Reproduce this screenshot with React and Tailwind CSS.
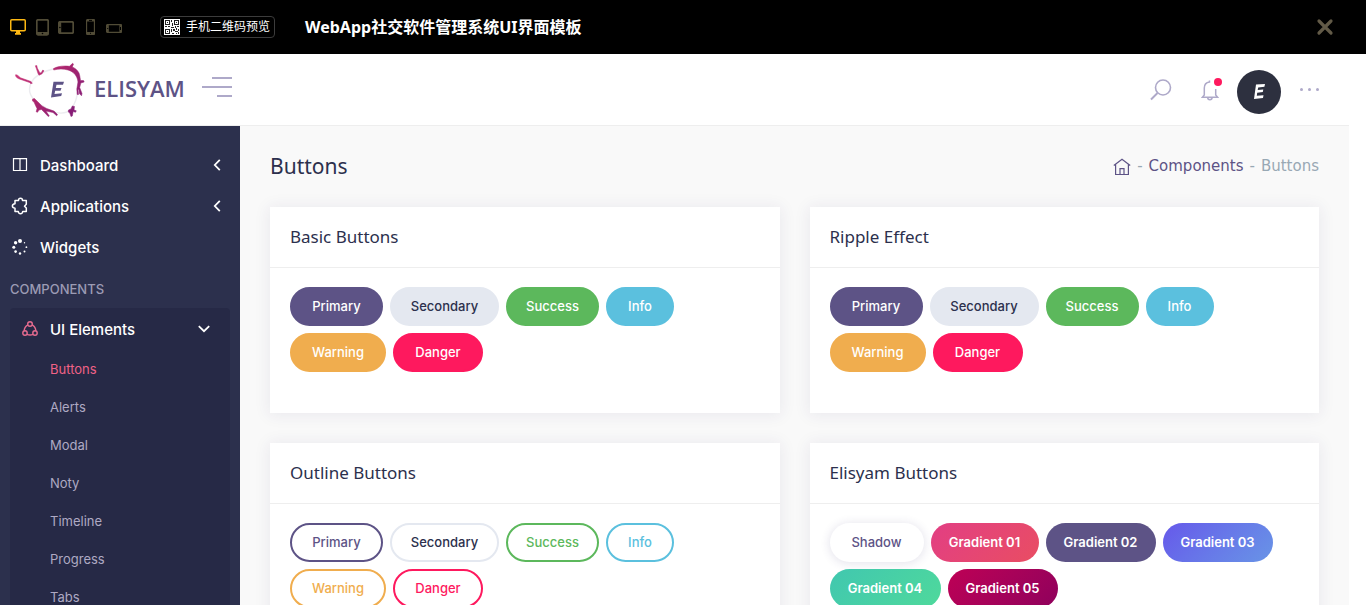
import React from "react";
import clsx from "clsx";

const DeviceIcons = () => (
  <div className="flex items-center text-[#504b36]">
    <button aria-label="Desktop" className="mr-[10px] text-[#fdb813]">
      <svg width="16" height="17" viewBox="0 0 16 17" fill="none" className="block">
        <rect x="0.75" y="0.75" width="14.5" height="11" rx="1" stroke="currentColor" strokeWidth="1.5" />
        <path d="M6 12h4v2h1v1.7H5V14h1z" fill="currentColor" />
      </svg>
    </button>
    <button aria-label="Tablet portrait" className="mr-[9px]">
      <svg width="13" height="17" viewBox="0 0 13 17" fill="none" className="block">
        <rect x="0.75" y="0.75" width="11.5" height="15" rx="1.5" stroke="currentColor" strokeWidth="1.8" />
        <path d="M1 13h11v3H1z" fill="currentColor" />
        <circle cx="6.5" cy="14.5" r="0.8" fill="#000" />
      </svg>
    </button>
    <button aria-label="Tablet landscape" className="mr-[12px]">
      <svg width="16" height="13" viewBox="0 0 16 13" fill="none" className="block">
        <rect x="0.75" y="0.75" width="14.5" height="11.5" rx="1.5" stroke="currentColor" strokeWidth="1.8" />
        <path d="M1 1h2.2v11H1z" fill="currentColor" />
        <circle cx="1.9" cy="6.5" r="0.8" fill="#000" />
      </svg>
    </button>
    <button aria-label="Phone portrait" className="mr-[11px]">
      <svg width="9" height="16" viewBox="0 0 9 16" fill="none" className="block">
        <rect x="0.5" y="0.5" width="8" height="15" rx="1.3" stroke="currentColor" strokeWidth="1.3" />
        <path d="M.5 1h8v1.6h-8zM.5 13h8v2.4h-8z" fill="currentColor" />
        <path d="M3 1.4h3M4 14.3h1" stroke="#000" />
      </svg>
    </button>
    <button aria-label="Phone landscape" className="pt-0.5">
      <svg width="16" height="9" viewBox="0 0 16 9" fill="none" className="block">
        <rect x="0.5" y="0.5" width="15" height="8" rx="1.3" stroke="currentColor" strokeWidth="1.3" />
        <path d="M.5 1h2.3v7H.5zM13.4 1h2v7h-2z" fill="currentColor" />
        <path d="M1.7 4v1M14.5 3v3" stroke="#000" />
      </svg>
    </button>
  </div>
);

const QrIcon = () => (
  <svg width="16" height="16" viewBox="0 0 16 16" fill="none" shapeRendering="crispEdges">
    <path d="M0 0h16v16H0z" fill="#fff" />
    <path
      d="M1 1h5v5H1zM10 1h5v5h-5zM1 10h5v5H1zM7 1h1v2H7zM8 4h1v3H8zM7 8h3v1H7zM1 7h2v1H1zM4 7h2v1H4zM11 7h1v2h-1zM13 7h2v1h-2zM7 10h1v3H7zM9 10h2v2H9zM12 9h1v2h-1zM14 10h1v2h-1zM11 12h3v1h-3zM8 14h2v1H8zM12 14h1v1h-1zM14 13h1v2h-1z"
      fill="#222"
    />
    <path d="M2 2h3v3H2zM11 2h3v3h-3zM2 11h3v3H2z" fill="#fff" />
    <path d="M3 3h1v1H3zM12 3h1v1h-1zM3 12h1v1H3z" fill="#222" />
  </svg>
);

const Splash = () => (
  <svg width="72" height="56" viewBox="14 61 72 56" fill="none" className="block">
    <defs>
      <linearGradient id="ink" x1="14" y1="61" x2="80" y2="117" gradientUnits="userSpaceOnUse">
        <stop stopColor="#d23a7c" />
        <stop offset="0.5" stopColor="#aa256e" />
        <stop offset="1" stopColor="#7c1a78" />
      </linearGradient>
    </defs>
    <path
      d="M29.5 88C30 77 42 69.500 57 67.500C68 66.500 77 70 78 80C78.500 94 75 106 67 111C58 114.500 50 110 43 105C35 100 29.500 96 29.500 88z"
      fill="#fff"
      stroke="#ececf0"
      strokeWidth="1.4"
    />
    <g fill="url(#ink)" stroke="url(#ink)" strokeWidth="0.5" strokeLinejoin="round">
      <path d="M53.500 67.500C58 65 65 64.600 69.500 65.300L72.500 62.300L73.500 63L72.300 66C75 67 77.500 69 79 72L79.800 75L80.500 79.500L83.500 79.500L84.200 81L80.800 82L79.700 86.500L82 92.500L81.500 94.800L79.300 92.500L79 89L78 88L78.500 93.500L77.200 93.500L76.800 88L78 81C77.500 75 73.500 70.500 68 69C63 67.500 58 68 53.700 69z" />
      <path d="M15.500 73.800C17 73.300 18.500 75 20.500 76.800L31 80.500L32.300 82.300L30.800 82.700L29.500 81.500L20 78.200C17.500 77.400 15.300 76 15.500 73.800z" />
      <path d="M35.300 64.800L36.800 64.500L37.300 67L39.800 71.800L41 72L42.800 69L44 69.800L41.800 73L39 74.200L38 72.500L36.500 68z" />
      <path d="M32.500 98L34.500 97.500L38 101L42 105L46.500 107.500L54 110L57.500 113.500L56.700 114.800L53 111.500L48 110.500L46 110L49.300 115L48.200 115.500L44 111L41.500 108.500L39 109L37.500 111.300L36.200 110.800L37 107.500L35.500 104.500L34 101L32.500 100z" />
      <path d="M68.500 109L71 108L72.300 105L74.500 105.500L74 109L76.300 109.800L75.500 111.300L73.200 110.500L72.300 115L71 115.600L69.800 112L68.300 111z" />
    </g>
    <path d="M53.500 80.800H64L63 83.800H56.500L55.800 87H61.500L60.500 89.700H55.200L54.500 93L62 92.200L61.200 95L51 96.500z" fill="#5d5386" />
  </svg>
);

const PreviewBar = () => (
  <div className="flex h-[54px] shrink-0 items-center bg-black pr-8 pl-[10px] text-white">
    <DeviceIcons />
    <a
      href="#qr"
      className="ml-[38px] flex h-[22px] items-center gap-1.5 rounded-[4px] border border-[#3c3c3c] pr-1 pl-[3px] font-['Noto_Sans','Noto_Sans_CJK_SC',sans-serif] text-xs"
    >
      <QrIcon />
      手机二维码预览
    </a>
    <h1 className="ml-[30px] font-['Noto_Sans','Noto_Sans_CJK_SC',sans-serif] text-base font-bold">
      WebApp社交软件管理系统UI界面模板
    </h1>
    <button aria-label="Close" className="ml-auto text-[#625a47]">
      <svg width="18" height="18" viewBox="0 0 18 18" className="block">
        <path d="M3 3l12 12M15 3L3 15" stroke="currentColor" strokeWidth="3.200" strokeLinecap="round" />
      </svg>
    </button>
  </div>
);

const Header = () => (
  <header className="flex h-[72px] shrink-0 items-center border-b border-[#eeeeee] bg-white pr-[29px] pl-[14px] text-[#aea9c9]">
    <a href="#home" className="flex items-center gap-2">
      <Splash />
      <span className="pb-0.5 font-['Open_Sans',sans-serif] text-[22px] font-semibold text-[#5d5386]">ELISYAM</span>
    </a>
    <button aria-label="Toggle menu" className="ml-[17px] flex w-[30px] flex-col items-end gap-[7px] pb-1.5">
      <span className="h-0.5 w-5 bg-[#aea9c9]" />
      <span className="h-0.5 w-[30px] bg-[#aea9c9]" />
      <span className="h-0.5 w-[15px] bg-[#aea9c9]" />
    </button>
    <div className="ml-auto flex items-center">
      <button aria-label="Search">
        <svg width="22" height="22" viewBox="0 0 22 22" fill="none" stroke="currentColor" strokeWidth="1.600" className="block">
          <circle cx="13" cy="8.500" r="7.500" />
          <path d="M7.500 14L1 20.500" strokeWidth="2" />
        </svg>
      </button>
      <button aria-label="Notifications" className="relative ml-[29px]">
        <svg width="18" height="22" viewBox="0 0 18 22" fill="none" stroke="currentColor" strokeWidth="1.500" className="block">
          <path d="M8.500 1.500V3C5 3.500 3.300 5.500 3.300 9V16L1.300 18.300H16.700L14.700 16V10M6.700 18.500a2.200 2.200 0 0 0 4.400 0" />
        </svg>
        <span className="absolute -top-px right-[-3px] size-2 rounded-full bg-[#fe195e]" />
      </button>
      <button aria-label="Profile" className="mt-1 ml-[18px] flex size-11 items-center justify-center rounded-full bg-[#2d303f]">
        <svg width="11" height="15" viewBox="0 0 11 15" className="block">
          <path d="M2 .5L11 0L10.400 2.700L4.200 3.400L3.700 6L9.300 5.500L8.800 8L3.200 8.700L2.800 11.800L9.500 11.200L9 14L0 15z" fill="#fff" />
        </svg>
      </button>
      <button aria-label="More" className="ml-[18px] flex gap-[5px] p-px">
        <span className="size-[3px] rounded-full bg-[#aea9c9]" />
        <span className="size-[3px] rounded-full bg-[#aea9c9]" />
        <span className="size-[3px] rounded-full bg-[#aea9c9]" />
      </button>
    </div>
  </header>
);

const ColumnsIcon = () => (
  <svg width="20" height="20" viewBox="0 0 20 20" fill="none" stroke="currentColor" strokeWidth="1.200">
    <path d="M3.500 3.500h13v12h-13zM3 3.700h14M10 4v12" />
  </svg>
);
const PuzzleIcon = () => (
  <svg width="20" height="20" viewBox="0 0 20 20" fill="none" stroke="currentColor" strokeWidth="1.500" strokeLinejoin="round">
    <path d="M5 4.500H8.500C8.500 3 9.300 2.300 10.500 2.300S12.500 3 12.500 4.500H16.300V8.300L14.500 10.200L16.300 12V15.500H12.700C12.500 17 11.700 17.700 10.500 17.700S8.500 17 8.300 15.500H5V12.200C3.300 12 2.400 11.300 2.400 10S3.300 8 5 7.800z" />
  </svg>
);
const SpinnerIcon = () => (
  <svg width="20" height="20" viewBox="0 0 20 20" fill="currentColor">
    <circle cx="10" cy="4" r="2" />
    <circle cx="5.600" cy="5.800" r="1.700" />
    <circle cx="3.800" cy="10.200" r="1.500" />
    <circle cx="5.600" cy="14.600" r="1.300" />
    <circle cx="10" cy="16.500" r="1.200" />
    <circle cx="14.500" cy="14.600" r="1" />
    <circle cx="16.400" cy="10.200" r="0.900" />
    <circle cx="14.500" cy="5.800" r="0.700" />
  </svg>
);
const ShareIcon = () => (
  <svg width="20" height="20" viewBox="0 0 20 20" fill="none" stroke="currentColor" strokeWidth="1.400">
    <circle cx="10" cy="5" r="2.300" />
    <circle cx="5" cy="14" r="2.200" />
    <circle cx="15" cy="14" r="2.200" />
    <path d="M7.800 5.800C5.500 7 4.300 9 4.200 11.800M12.200 5.800C14.500 7 15.700 9 15.800 11.800M7 15.300C9 16.300 11 16.300 13 15.300" />
  </svg>
);

const navItems = [
  { label: "Dashboard", Icon: ColumnsIcon, arrow: true },
  { label: "Applications", Icon: PuzzleIcon, arrow: true },
  { label: "Widgets", Icon: SpinnerIcon },
];
const uiItems = ["Buttons", "Alerts", "Modal", "Noty", "Timeline", "Progress", "Tabs", "Tooltips"];

const Chevron = ({ className }) => (
  <svg width="12" height="12" viewBox="0 0 12 12" fill="none" className={className}>
    <path d="M8.800 .8L3.800 6l5 5.200" stroke="currentColor" strokeWidth="1.800" />
  </svg>
);

const Sidebar = () => (
  <nav className="w-60 shrink-0 bg-[#2c304d] pt-[18px] text-[15px] leading-5 font-medium text-white">
    <ul>
      {navItems.map(({ label, Icon, arrow }) => (
        <li key={label}>
          <a href={"#" + label} className="flex h-[41px] items-center gap-[10px] pr-[17px] pl-[10px]">
            <Icon />
            <span className="pt-0.5">{label}</span>
            {arrow && <Chevron className="ml-auto" />}
          </a>
        </li>
      ))}
    </ul>
    <h2 className="flex h-[41px] items-center pt-0.5 pl-[10px] text-[13px] text-[#9c9bb4]">COMPONENTS</h2>
    <div className="mx-[10px] rounded-[4px] bg-[#262946]">
      <button className="flex h-[41px] w-full items-center gap-[10px] pr-5 pl-[10px]">
        <span className="text-[#e76c90]">
          <ShareIcon />
        </span>
        <span className="pt-0.5">UI Elements</span>
        <Chevron className="ml-auto -rotate-90" />
      </button>
      <ul className="text-[13px] leading-4 font-normal text-[#aea9c3]">
        {uiItems.map((label, i) => (
          <li key={label}>
            <a href={"#" + label} className={clsx("flex h-[38px] items-center pt-0.5 pl-10", i === 0 && "text-[#f06287]")}>
              {label}
            </a>
          </li>
        ))}
      </ul>
    </div>
  </nav>
);

const basicButtons = [
  ["Primary", "w-[93px] border-[#5d5386] bg-[#5d5386] text-white"],
  ["Secondary", "w-[109px] border-[#e4e8f0] bg-[#e4e8f0] text-[#2c304d]"],
  ["Success", "w-[93px] border-[#5cb85c] bg-[#5cb85c] text-white"],
  ["Info", "w-[68px] border-[#5bc0de] bg-[#5bc0de] text-white"],
  ["Warning", "w-24 border-[#f0ad4e] bg-[#f0ad4e] text-white"],
  ["Danger", "w-[90px] border-[#fe195e] bg-[#fe195e] text-white"],
];
const outlineButtons = [
  ["Primary", "w-[93px] border-[#5d5386] text-[#5d5386]"],
  ["Secondary", "w-[109px] border-[#e4e8f0] text-[#2c304d]"],
  ["Success", "w-[93px] border-[#5cb85c] text-[#5cb85c]"],
  ["Info", "w-[68px] border-[#5bc0de] text-[#5bc0de]"],
  ["Warning", "w-24 border-[#f0ad4e] text-[#f0ad4e]"],
  ["Danger", "w-[90px] border-[#fe195e] text-[#fe195e]"],
];
const elisyamButtons = [
  ["Shadow", "w-[94px] border-transparent text-[#5d5386] shadow-[0_1px_10px_1px_rgba(52,40,104,0.12)]"],
  ["Gradient 01", "w-[108px] border-transparent bg-linear-135 from-[#e23e83] to-[#e94d62] text-white"],
  ["Gradient 02", "w-[110px] border-transparent bg-[#5d5386] text-white"],
  ["Gradient 03", "w-[110px] border-transparent bg-linear-135 from-[#6658ea] to-[#6894e6] text-white"],
  ["Gradient 04", "w-[111px] border-transparent bg-linear-135 from-[#41c7af] to-[#4fd99b] text-white"],
  ["Gradient 05", "w-[110px] border-transparent bg-linear-135 from-[#be0055] to-[#8f005c] text-white"],
];

const Card = ({ title, buttons, semibold }) => (
  <section className="min-h-[206px] bg-white shadow-[0_1px_15px_1px_rgba(52,40,104,0.08)]">
    <h3 className="flex h-[61px] items-center border-b border-[#eeeeee] px-5 font-['Noto_Sans',sans-serif] text-[17px] text-[#2c304d]">
      {title}
    </h3>
    <div className="flex flex-wrap gap-[7px] px-5 pt-[19px] pb-10">
      {buttons.map(([label, style]) => (
        <button
          key={label}
          className={clsx(
            "h-[39px] rounded-full border-2 bg-origin-border text-[13px] whitespace-nowrap",
            semibold && label !== "Shadow" ? "font-semibold" : "font-medium",
            style
          )}
        >
          {label}
        </button>
      ))}
    </div>
  </section>
);

const HomeIcon = () => (
  <svg width="18" height="18" viewBox="0 0 18 18" fill="none" stroke="#5d5386" strokeWidth="1.200" className="block">
    <path d="M.8 7.500L9 1.200L17.200 7.500M2.600 6.500V16.500H15.400V6.500M7 16.500V10.600H11V16.500" />
  </svg>
);

export default function App() {
  return (
    <div className="flex h-screen flex-col overflow-hidden bg-white font-['Inter',sans-serif]">
      <PreviewBar />
      <div className="mr-[17px] flex min-h-0 flex-1 flex-col">
        <Header />
        <div className="flex min-h-0 flex-1 overflow-hidden">
          <Sidebar />
          <main className="flex-1 bg-[#f9f9f9] px-[30px]">
            <div className="flex h-[81px] items-center justify-between">
              <h2 className="font-['Noto_Sans',sans-serif] text-[21px] text-[#2c304d]">Buttons</h2>
              <nav aria-label="Breadcrumb" className="flex items-center gap-1.5 font-['DejaVu_Sans',sans-serif] text-[15px] text-[#98a8b4]">
                <a href="#home" aria-label="Home">
                  <HomeIcon />
                </a>
                <span>-</span>
                <a href="#components" className="text-[#5d5386]">
                  Components
                </a>
                <span>-</span>
                <span>Buttons</span>
              </nav>
            </div>
            <div className="grid grid-cols-2 gap-[30px]">
              <Card title="Basic Buttons" buttons={basicButtons} />
              <Card title="Ripple Effect" buttons={basicButtons} />
              <Card title="Outline Buttons" buttons={outlineButtons} />
              <Card title="Elisyam Buttons" buttons={elisyamButtons} semibold />
            </div>
          </main>
        </div>
      </div>
    </div>
  );
}
